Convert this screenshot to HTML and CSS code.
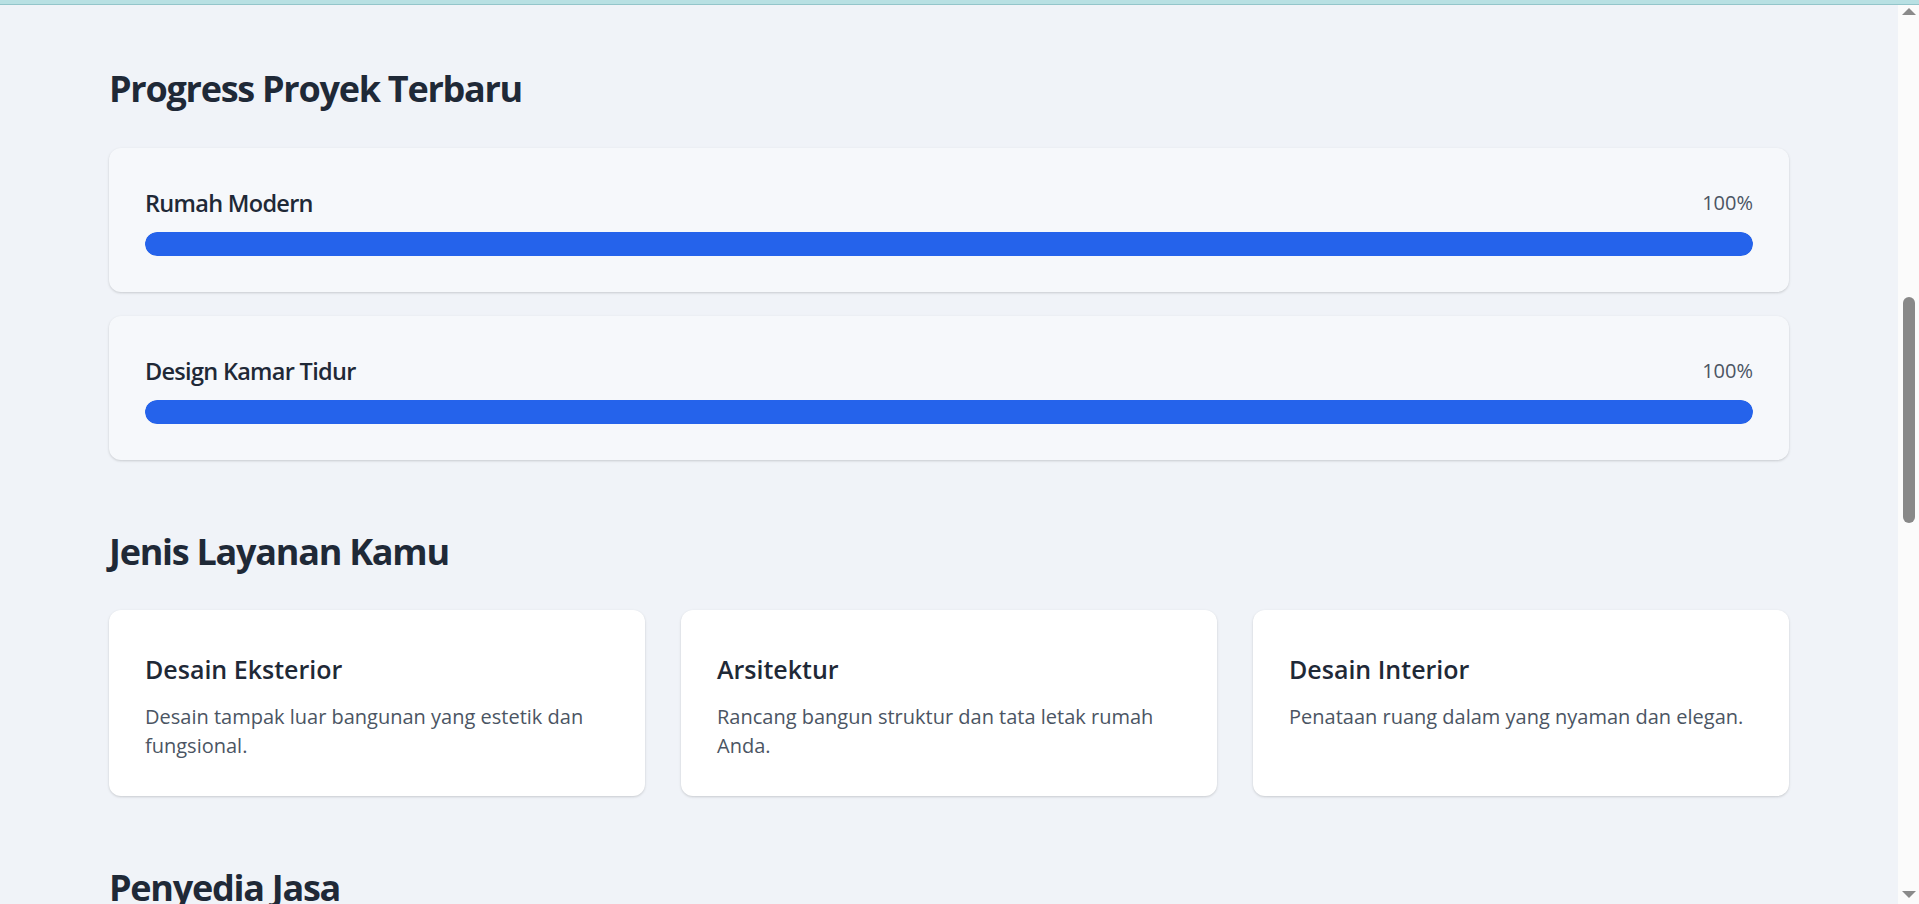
FILE: index.html
```html
<!DOCTYPE html>
<html lang="id">
<head>
<meta charset="utf-8">
<title>Dashboard</title>
<link rel="stylesheet" href="styles.css">
</head>
<body>
<div class="strip"></div>
<div class="frame">
  <main class="page">
    <div class="container">
      <section class="section">
        <h2 class="section-title">Progress Proyek Terbaru</h2>
        <div class="progress-list">
          <div class="progress-card">
            <div class="progress-head">
              <span class="progress-name">Rumah Modern</span>
              <span class="progress-pct">100%</span>
            </div>
            <div class="bar-track"><div class="bar-fill" style="width:100%"></div></div>
          </div>
          <div class="progress-card">
            <div class="progress-head">
              <span class="progress-name">Design Kamar Tidur</span>
              <span class="progress-pct">100%</span>
            </div>
            <div class="bar-track"><div class="bar-fill" style="width:100%"></div></div>
          </div>
        </div>
      </section>
      <section class="section">
        <h2 class="section-title">Jenis Layanan Kamu</h2>
        <div class="service-grid">
          <div class="service-card">
            <h3 class="service-title">Desain Eksterior</h3>
            <p class="service-desc">Desain tampak luar bangunan yang estetik dan fungsional.</p>
          </div>
          <div class="service-card">
            <h3 class="service-title">Arsitektur</h3>
            <p class="service-desc">Rancang bangun struktur dan tata letak rumah Anda.</p>
          </div>
          <div class="service-card">
            <h3 class="service-title">Desain Interior</h3>
            <p class="service-desc">Penataan ruang dalam yang nyaman dan elegan.</p>
          </div>
        </div>
      </section>
      <section class="section">
        <h2 class="section-title">Penyedia Jasa</h2>
      </section>
    </div>
  </main>
  <aside class="scrollbar">
    <span class="arrow arrow-up"></span>
    <div class="thumb-area"><div class="thumb"></div></div>
    <span class="arrow arrow-down"></span>
  </aside>
</div>
</body>
</html>
```

FILE: styles.css
```css
html, body {
  margin: 0;
  padding: 0;
  height: 904px;
  overflow: hidden;
}
body {
  background: #f0f3f8;
  font-family: "Open Sans", "Noto Sans", "Liberation Sans", sans-serif;
  color: #1f2937;
}
.strip {
  height: 4px;
  background: #b8e0e3;
  border-bottom: 1px solid #93c5ca;
}
.frame {
  display: flex;
  height: 899px;
}
.page {
  flex: 1;
  padding-top: 62px;
  overflow: hidden;
}
.container {
  width: 1680px;
  margin: 0 auto;
  display: flex;
  flex-direction: column;
  gap: 70px;
}
.section-title {
  margin: 0 0 37.5px;
  font-size: 36px;
  line-height: 43.2px;
  font-weight: 700;
  letter-spacing: -0.035em;
  color: #1f2937;
}
.progress-list {
  display: flex;
  flex-direction: column;
  gap: 24px;
}
.progress-card {
  background: #f6f8fb;
  border-radius: 12px;
  padding: 36px;
  box-shadow: 0 1px 3px rgba(0, 0, 0, 0.12), 0 1px 2px rgba(0, 0, 0, 0.05);
}
.progress-head {
  height: 32px;
  margin-bottom: 16px;
  display: flex;
  justify-content: space-between;
  align-items: flex-end;
}
.progress-name {
  font-size: 23.5px;
  line-height: 26px;
  font-weight: 600;
  letter-spacing: -0.03em;
  color: #1f2937;
}
.progress-pct {
  font-size: 20px;
  line-height: 26px;
  color: #4b5563;
}
.bar-track {
  height: 24px;
  border-radius: 12px;
  background: #e5e7eb;
  overflow: hidden;
}
.bar-fill {
  height: 100%;
  background: #2563eb;
  border-radius: 12px;
}
.service-grid {
  display: grid;
  grid-template-columns: repeat(3, 1fr);
  gap: 36px;
}
.service-card {
  background: #ffffff;
  border-radius: 12px;
  padding: 42px 36px 36px;
  box-shadow: 0 1px 3px rgba(0, 0, 0, 0.12), 0 1px 2px rgba(0, 0, 0, 0.05);
}
.service-title {
  margin: 0 0 15.5px;
  font-size: 25px;
  line-height: 34px;
  font-weight: 600;
  color: #1f2937;
}
.service-desc {
  margin: 0;
  font-size: 20px;
  line-height: 29px;
  color: #4b5563;
}
.scrollbar {
  width: 21px;
  background: #fbfbfb;
  display: flex;
  flex-direction: column;
  align-items: center;
}
.arrow {
  width: 0;
  height: 0;
  border-left: 7px solid transparent;
  border-right: 7px solid transparent;
}
.arrow-up {
  margin-top: 3px;
  border-bottom: 7px solid #8a8a8a;
}
.arrow-down {
  margin-bottom: 6px;
  border-top: 7px solid #8a8a8a;
}
.thumb-area {
  flex: 1;
  width: 100%;
  display: flex;
  justify-content: center;
}
.thumb {
  margin-top: 282px;
  width: 12px;
  height: 226px;
  border-radius: 6px;
  background: #888888;
}
```
